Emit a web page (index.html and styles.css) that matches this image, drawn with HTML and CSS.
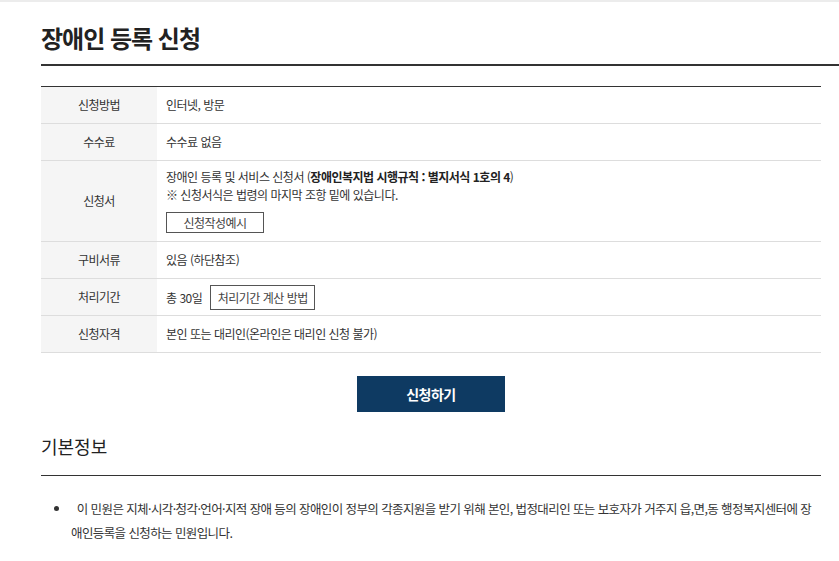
FILE: index.html
```html
<!DOCTYPE html>
<html lang="ko">
<head>
<meta charset="UTF-8">
<meta name="viewport" content="width=device-width, initial-scale=1">
<title>장애인 등록 신청</title>
<link rel="stylesheet" href="styles.css">
</head>
<body>
<div class="top-bar"></div>

<div class="page">
    <h1 class="page-title">장애인 등록 신청</h1>

    <div class="content">
        <table class="info-table">
            <tr>
                <th>신청방법</th>
                <td>인터넷, 방문</td>
            </tr>
            <tr>
                <th>수수료</th>
                <td>수수료 없음</td>
            </tr>
            <tr>
                <th>신청서</th>
                <td class="form-cell">
                    <p>장애인 등록 및 서비스 신청서 (<b>장애인복지법 시행규칙 : 별지서식 1호의 4</b>)</p>
                    <p>※ 신청서식은 법령의 마지막 조항 밑에 있습니다.</p>
                    <button type="button" class="line-btn">신청작성예시</button>
                </td>
            </tr>
            <tr>
                <th>구비서류</th>
                <td>있음 (하단참조)</td>
            </tr>
            <tr>
                <th>처리기간</th>
                <td><span class="period">총 30일</span><button type="button" class="line-btn wide">처리기간 계산 방법</button></td>
            </tr>
            <tr>
                <th>신청자격</th>
                <td>본인 또는 대리인(온라인은 대리인 신청 불가)</td>
            </tr>
        </table>

        <div class="apply-row">
            <button type="button" class="apply-btn">신청하기</button>
        </div>

        <h2 class="section-title">기본정보</h2>
        <ul class="info-list">
            <li>&nbsp; 이 민원은 지체·시각·청각·언어·지적 장애 등의 장애인이 정부의 각종지원을 받기 위해 본인, 법정대리인 또는 보호자가 거주지 읍,면,동 행정복지센터에 장애인등록을 신청하는 민원입니다.</li>
        </ul>
    </div>
</div>
</body>
</html>
```

FILE: styles.css
```css
body {
    margin: 0;
    background: #fff;
    color: #333;
    font-family: "Noto Sans CJK KR", "Noto Sans", sans-serif;
    overflow: hidden;
}
.top-bar {
    height: 2px;
    background-color: #ececec;
}
.page {
    padding-left: 41px;
}
.page-title {
    margin: 0;
    padding: 20px 0 10px;
    font-size: 24px;
    font-weight: 700;
    line-height: 32px;
    color: #222;
    letter-spacing: -1px;
    border-bottom: 2px solid #333;
}
.content {
    width: 780px;
}
/* 신청 정보 표 */
.info-table {
    width: 100%;
    margin-top: 20px;
    border-collapse: collapse;
    border-top: 1px solid #333;
    border-bottom: 1px solid #333;
    font-size: 12px;
    letter-spacing: -0.5px;
}
.info-table th,
.info-table td {
    height: 36px;
    padding: 0;
    border-bottom: 1px solid #ddd;
    line-height: 18px;
}
.info-table th {
    width: 116px;
    background-color: #f5f5f5;
    font-weight: 400;
    text-align: center;
    color: #333;
}
.info-table td {
    padding-left: 9px;
    text-align: left;
}
.info-table td.form-cell {
    padding-top: 7px;
    padding-bottom: 8px;
}
.form-cell p {
    margin: 0;
}
.form-cell b {
    font-weight: 700;
    color: #222;
}
.line-btn {
    height: 21px;
    width: 98px;
    margin-top: 8px;
    padding: 0;
    border: 1px solid #555;
    background: #fff;
    color: #444;
    font-family: inherit;
    font-size: 12px;
    letter-spacing: -0.5px;
    vertical-align: middle;
}
.line-btn.wide {
    width: 105px;
    height: 25px;
    margin-top: 0;
    margin-left: 8px;
}
.period {
    vertical-align: middle;
}
.apply-row {
    display: flex;
    justify-content: center;
    padding-top: 23px;
}
.apply-btn {
    width: 148px;
    height: 36px;
    border: 0;
    background-color: #0e3a62;
    color: #fff;
    font-family: inherit;
    font-size: 14px;
    font-weight: 700;
    letter-spacing: -0.5px;
}
.section-title {
    margin: 20px 0 0;
    padding-bottom: 15px;
    font-size: 18px;
    font-weight: 400;
    line-height: 28px;
    color: #222;
    border-bottom: 1px solid #333;
}
.info-list {
    margin: 21px 0 0;
    padding-left: 30px;
    font-size: 12.5px;
    line-height: 24px;
    letter-spacing: -0.6px;
}
```
